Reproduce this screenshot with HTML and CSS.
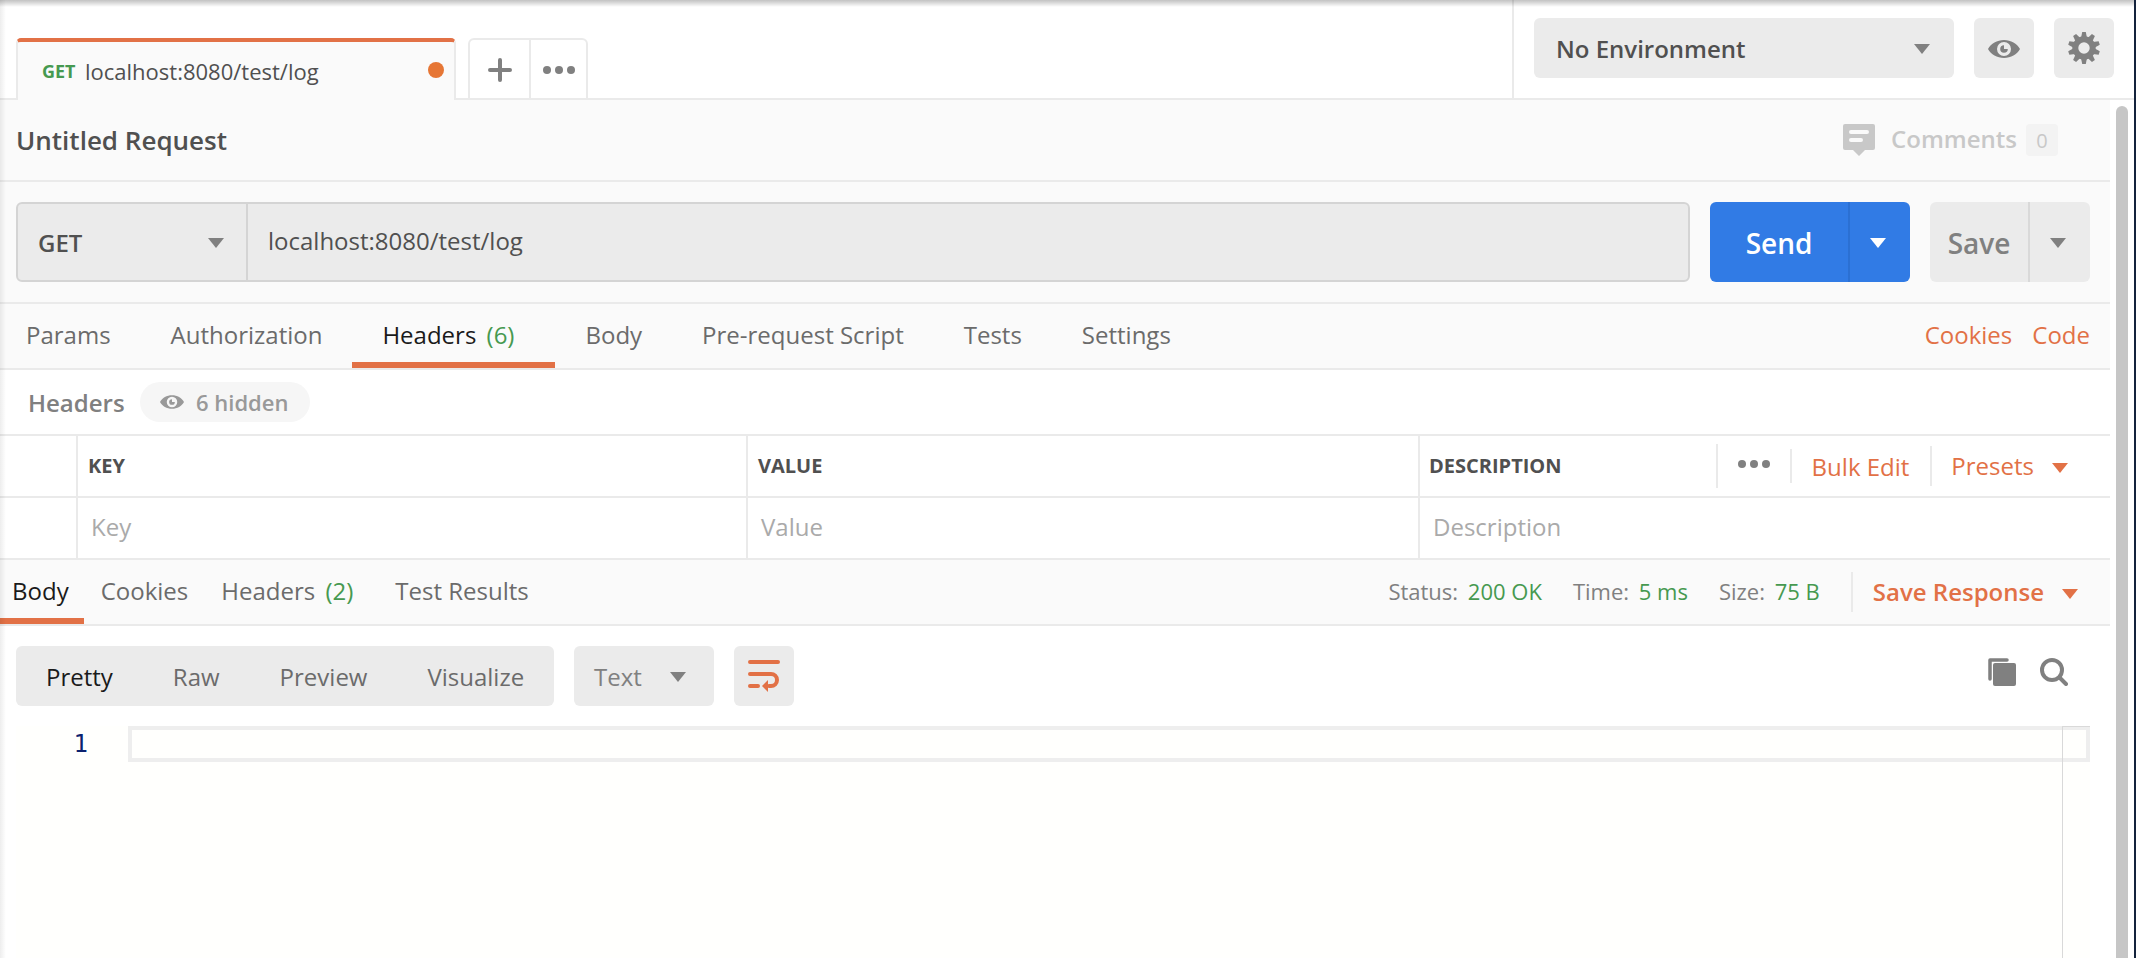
FILE: index.html
```html
<!DOCTYPE html>
<html lang="en">
<head>
    <meta charset="UTF-8">
    <meta name="viewport" content="width=device-width, initial-scale=1.0">
    <title>Untitled Request</title>
    <link rel="stylesheet" href="styles.css">
</head>
<body>
    <svg class="defs">
        <symbol id="eye" viewBox="0 0 32 18">
            <path fill="currentColor" fill-rule="evenodd" d="M0 9C3 3.500 9 0 16 0s13 3.500 16 9c-3 5.500-9 9-16 9S3 14.500 0 9zM16 2a7 7 0 1 0 0 14a7 7 0 1 0 0-14z"/>
            <path fill="currentColor" d="M16 5.200v3.800h3.800a3.800 3.800 0 1 1-3.800-3.800z"/>
        </symbol>
    </svg>

    <div class="app">
        <!-- Tabs and environment -->
        <div class="topbar">
            <div class="request-tab">
                <span class="tab-method">GET</span>
                <span class="tab-name">localhost:8080/test/log</span>
                <span class="unsaved"></span>
            </div>
            <div class="tab-actions">
                <div class="tab-action">
                    <svg width="24" height="24" viewBox="0 0 24 24"><path d="M12 2v20M2 12h20" stroke="#808080" stroke-width="4" stroke-linecap="round"/></svg>
                </div>
                <div class="tab-action">
                    <svg width="32" height="8" viewBox="0 0 32 8" fill="#808080"><circle cx="4" cy="4" r="4"/><circle cx="16" cy="4" r="4"/><circle cx="28" cy="4" r="4"/></svg>
                </div>
            </div>
            <div class="environment">
                <div class="env-select">No Environment <i class="caret"></i></div>
                <div class="icon-button preview"><svg width="32" height="18"><use href="#eye"/></svg></div>
                <div class="icon-button">
                    <svg width="32" height="32" viewBox="-16 -16 32 32">
                        <g fill="#808080">
                            <path id="tooth" d="M-3-10L-1.800-16h3.600L3-10z"/>
                            <use href="#tooth" transform="rotate(36)"/>
                            <use href="#tooth" transform="rotate(72)"/>
                            <use href="#tooth" transform="rotate(108)"/>
                            <use href="#tooth" transform="rotate(144)"/>
                            <use href="#tooth" transform="rotate(180)"/>
                            <use href="#tooth" transform="rotate(216)"/>
                            <use href="#tooth" transform="rotate(252)"/>
                            <use href="#tooth" transform="rotate(288)"/>
                            <use href="#tooth" transform="rotate(324)"/>
                        </g>
                        <circle r="8.700" fill="none" stroke="#808080" stroke-width="6"/>
                    </svg>
                </div>
            </div>
        </div>

        <div class="main">
            <div class="content">
                <div class="title-row">
                    <span class="title">Untitled Request</span>
                    <div class="comments">
                        <svg width="32" height="32" viewBox="0 0 32 32"><path fill="#c8c8c8" d="M2 0h28a2 2 0 0 1 2 2v22a2 2 0 0 1-2 2h-8l-6 6-6-6H2a2 2 0 0 1-2-2V2a2 2 0 0 1 2-2z"/><path d="M8 8h16M8 16h10" stroke="#fafafa" stroke-width="4" stroke-linecap="round"/></svg>
                        <span class="comments-label">Comments</span>
                        <span class="comments-count">0</span>
                    </div>
                </div>

                <!-- URL row -->
                <div class="url-row">
                    <div class="url-box">
                        <div class="method">GET <i class="caret"></i></div>
                        <div class="url">localhost:8080/test/log</div>
                    </div>
                    <div class="split send">
                        <span class="split-label">Send</span>
                        <span class="split-arrow"><i class="caret"></i></span>
                    </div>
                    <div class="split save">
                        <span class="split-label">Save</span>
                        <span class="split-arrow"><i class="caret"></i></span>
                    </div>
                </div>

                <div class="request-tabs">
                    <span class="rtab">Params</span>
                    <span class="rtab">Authorization</span>
                    <span class="rtab active">Headers <em class="count">(6)</em></span>
                    <span class="rtab">Body</span>
                    <span class="rtab">Pre-request Script</span>
                    <span class="rtab">Tests</span>
                    <span class="rtab">Settings</span>
                    <div class="links">
                        <span>Cookies</span>
                        <span>Code</span>
                    </div>
                </div>

                <!-- Headers editor -->
                <div class="headers-row">
                    <span class="headers-label">Headers</span>
                    <span class="hidden-pill"><svg width="24" height="14"><use href="#eye"/></svg>6 hidden</span>
                </div>
                <div class="table">
                    <div class="cell"></div>
                    <div class="cell head">KEY</div>
                    <div class="cell head">VALUE</div>
                    <div class="cell head">DESCRIPTION
                        <div class="table-actions">
                            <span class="more"><svg width="32" height="8" viewBox="0 0 32 8" fill="#808080"><circle cx="4" cy="4" r="4"/><circle cx="16" cy="4" r="4"/><circle cx="28" cy="4" r="4"/></svg></span>
                            <span class="bulk">Bulk Edit</span>
                            <span class="presets">Presets <i class="caret"></i></span>
                        </div>
                    </div>
                    <div class="cell"></div>
                    <div class="cell hint">Key</div>
                    <div class="cell hint">Value</div>
                    <div class="cell hint">Description</div>
                </div>

                <!-- Response -->
                <div class="response-bar">
                    <span class="restab active">Body</span>
                    <span class="restab">Cookies</span>
                    <span class="restab with-count">Headers <em class="count">(2)</em></span>
                    <span class="restab">Test Results</span>
                    <div class="stats">
                        <span class="stat">Status: <b>200 OK</b></span>
                        <span class="stat">Time: <b>5 ms</b></span>
                        <span class="stat">Size: <b>75 B</b></span>
                        <span class="save-response">Save Response <i class="caret"></i></span>
                    </div>
                </div>
                <div class="view-row">
                    <div class="view-modes">
                        <span class="mode active">Pretty</span>
                        <span class="mode">Raw</span>
                        <span class="mode">Preview</span>
                        <span class="mode">Visualize</span>
                    </div>
                    <div class="format">Text <i class="caret"></i></div>
                    <div class="icon-button">
                        <svg width="32" height="32" viewBox="0 0 32 32" fill="none" stroke="#e27146" stroke-width="4" stroke-linecap="round"><path d="M2 2h28M2 14h21a6 6 0 0 1 0 12h-2M2 26h8"/><path d="M20 20v12l-6-6z" fill="#e27146" stroke="none"/></svg>
                    </div>
                    <div class="view-tools">
                        <svg width="28" height="28" viewBox="0 0 28 28"><path d="M2 21V2h17" fill="none" stroke="#808080" stroke-width="3.500" stroke-linecap="round" stroke-linejoin="round"/><rect x="5" y="5" width="23" height="23" rx="2" fill="#808080"/></svg>
                        <svg width="28" height="28" viewBox="0 0 28 28" fill="none" stroke="#808080" stroke-width="4" stroke-linecap="round"><circle cx="12" cy="12" r="10"/><path d="M19.500 19.500l6.500 6.500"/></svg>
                    </div>
                </div>
                <div class="editor">
                    <div class="line-number">1</div>
                    <div class="code">
                        <div class="current-line"></div>
                        <div class="ruler"></div>
                    </div>
                </div>
            </div>
            <div class="scrollbar"><div class="thumb"></div></div>
        </div>
    </div>
</body>
</html>
```

FILE: styles.css
```css
* {
    box-sizing: border-box;
}

body {
    margin: 0;
    height: 958px;
    overflow: hidden;
    background: #14233c;
    font-family: "Open Sans", sans-serif;
    font-size: 24px;
    line-height: 32px;
    color: #505050;
    white-space: nowrap;
}

svg {
    display: block;
    flex-shrink: 0;
}

.defs {
    position: absolute;
    width: 0;
    height: 0;
}

.app {
    position: relative;
    display: flex;
    flex-direction: column;
    width: 2134px;
    height: 958px;
    overflow: hidden;
    background: #fff;
}

/* window shadow along the top and left edges */
.app::after {
    content: "";
    position: absolute;
    inset: 0;
    background:
        linear-gradient(rgba(0, 0, 0, 0.24), rgba(0, 0, 0, 0.14) 3px, transparent) top / 100% 7px no-repeat,
        linear-gradient(to right, rgba(0, 0, 0, 0.07), transparent) left / 6px 100% no-repeat;
}

.caret {
    border: 8px solid transparent;
    border-top: 10px solid #808080;
    border-bottom: 0;
}

.count {
    font-style: normal;
    color: #469950;
    margin-left: 4px;
}

/* top bar */
.topbar {
    display: flex;
    align-items: flex-end;
    height: 100px;
    padding-left: 16px;
    flex-shrink: 0;
    background: linear-gradient(#eaeaea, #eaeaea) bottom / 100% 2px no-repeat;
}

.request-tab {
    display: flex;
    align-items: center;
    width: 440px;
    height: 62px;
    padding: 0 10px 0 24px;
    border: 2px solid #eaeaea;
    border-top: 4px solid #e27146;
    border-bottom: 0;
    border-radius: 5px 5px 0 0;
    background: #fafafa;
    font-size: 22px;
}

.tab-method {
    width: 43px;
    font-size: 18px;
    font-weight: 700;
    color: #469950;
}

.unsaved {
    width: 16px;
    height: 16px;
    margin-left: auto;
    margin-bottom: 2px;
    border-radius: 50%;
    background: #e67635;
}

.tab-actions {
    display: flex;
    width: 120px;
    height: 62px;
    margin-left: 12px;
    border: 2px solid #eaeaea;
    border-radius: 6px 6px 0 0;
}

.tab-action {
    display: flex;
    align-items: center;
    justify-content: center;
    width: 59px;
    padding-top: 2px;
}

.tab-action + .tab-action {
    width: 57px;
    border-left: 2px solid #eaeaea;
}

.environment {
    display: flex;
    align-items: flex-start;
    gap: 20px;
    height: 100px;
    margin-left: auto;
    padding: 18px 20px 0;
    border-left: 2px solid #eaeaea;
}

.env-select {
    display: flex;
    align-items: center;
    justify-content: space-between;
    width: 420px;
    height: 60px;
    padding: 2px 24px 0 22px;
    border-radius: 6px;
    background: #ebebeb;
    font-weight: 600;
}

.icon-button {
    display: flex;
    align-items: center;
    justify-content: center;
    width: 60px;
    height: 60px;
    border-radius: 6px;
    background: #ebebeb;
    color: #808080;
}

.preview {
    padding-top: 2px;
}

.main {
    display: flex;
    flex: 1;
    min-height: 0;
}

.content {
    display: flex;
    flex-direction: column;
    width: 2110px;
}

.scrollbar {
    flex: 1;
    padding: 6px 6px 0;
}

.thumb {
    height: 100%;
    border-radius: 6px 6px 0 0;
    background: #c6c6c6;
}

/* title */
.title-row {
    display: flex;
    align-items: center;
    justify-content: space-between;
    height: 82px;
    padding: 0 52px 0 16px;
    border-bottom: 2px solid #eaeaea;
    background: #fafafa;
}

.title {
    font-size: 26px;
    font-weight: 600;
}

.comments {
    display: flex;
    align-items: center;
    color: #c8c8c8;
}

.comments-label {
    margin: -3px 9px 0 16px;
    font-weight: 600;
}

.comments-count {
    width: 32px;
    height: 32px;
    border-radius: 4px;
    background: #f3f3f3;
    font-size: 20px;
    line-height: 34px;
    text-align: center;
}

/* url */
.url-row {
    display: flex;
    gap: 20px;
    height: 122px;
    padding: 20px 20px 20px 16px;
    border-bottom: 2px solid #eaeaea;
    background: #fafafa;
}

.url-box {
    display: flex;
    flex: 1;
    height: 80px;
    border: 2px solid #d4d4d4;
    border-radius: 6px;
    background: #ebebeb;
}

.method {
    display: flex;
    align-items: center;
    justify-content: space-between;
    width: 230px;
    padding: 2px 22px 0 20px;
    border-right: 2px solid #d4d4d4;
    font-weight: 600;
}

.url {
    padding: 21px 20px;
}

.split {
    display: flex;
    align-items: center;
    height: 80px;
    border-radius: 6px;
    font-size: 28px;
    font-weight: 600;
}

.split-label {
    flex: 1;
    padding-top: 2px;
    text-align: center;
}

.split-arrow {
    display: flex;
    align-items: center;
    justify-content: center;
    width: 62px;
    height: 80px;
    padding: 2px 4px 0 0;
}

.send {
    width: 200px;
    background: #317be5;
    color: #fff;
}

.send .split-arrow {
    border-left: 2px solid #2b70d3;
}

.send .caret {
    border-top-color: #fff;
}

.save {
    width: 160px;
    background: #ebebeb;
    color: #808080;
}

.save .split-arrow {
    border-left: 2px solid #d9d9d9;
}

/* request tabs */
.request-tabs {
    display: flex;
    height: 66px;
    padding-right: 20px;
    border-bottom: 2px solid #eaeaea;
    background: #fafafa;
    color: #6b6b6b;
    line-height: 62px;
}

.rtab {
    padding: 0 30px;
}

.rtab:first-child {
    padding-left: 26px;
}

.rtab.active {
    padding-right: 41px;
    border-bottom: 6px solid #e27146;
    color: #1a1a1a;
}

.links {
    display: flex;
    gap: 20px;
    margin-left: auto;
    color: #e27146;
}

.headers-row {
    display: flex;
    align-items: center;
    height: 64px;
    padding-left: 28px;
    color: #808080;
    font-weight: 600;
}

.headers-label {
    width: 112px;
    padding-top: 2px;
}

.hidden-pill {
    display: flex;
    align-items: center;
    gap: 12px;
    width: 170px;
    height: 40px;
    padding-left: 20px;
    border-radius: 20px;
    background: #f6f6f6;
    color: #999;
    font-size: 22px;
}

.table {
    display: grid;
    grid-template-columns: 76px 670px 672px 1fr;
    grid-template-rows: 62px 62px;
    border-bottom: 2px solid #eaeaea;
}

.cell {
    display: flex;
    align-items: center;
    padding: 0 10px;
    border-top: 2px solid #eaeaea;
    border-left: 2px solid #eaeaea;
}

.cell:nth-child(4n + 1) {
    border-left: 0;
}

.head {
    font-size: 20px;
    font-weight: 700;
}

.hint {
    padding: 0 13px 2px;
    color: #aaa;
}

.head:nth-child(4n) {
    padding-left: 9px;
}

.table-actions {
    display: flex;
    align-items: center;
    margin-left: auto;
    margin-right: 32px;
    color: #e27146;
    font-size: 24px;
    font-weight: 400;
}

.more {
    display: flex;
    height: 44px;
    padding: 16px 20px 0;
    border-left: 2px solid #eaeaea;
}

.bulk {
    height: 34px;
    padding: 0 21px 0 20px;
    border-left: 2px solid #eaeaea;
    line-height: 35px;
}

.presets {
    display: flex;
    align-items: center;
    gap: 18px;
    height: 40px;
    padding-left: 19px;
    border-left: 2px solid #eaeaea;
}

/* response */
.response-bar {
    display: flex;
    height: 66px;
    border-bottom: 2px solid #eaeaea;
    background: #fafafa;
    color: #6b6b6b;
    line-height: 61px;
}

.restab {
    margin-right: 18px;
    padding-right: 15px;
}

.restab.active {
    margin-right: 17px;
    padding-left: 12px;
    border-bottom: 6px solid #e27146;
    color: #1a1a1a;
}

.restab.with-count {
    padding-right: 24px;
}

.stats {
    display: flex;
    align-items: center;
    margin-left: auto;
    padding-right: 32px;
    color: #808080;
    font-size: 22px;
}

.stat {
    margin: -2px 31px 0 0;
}

.stat b {
    margin-left: 4px;
    font-weight: 400;
    color: #469950;
}

.save-response {
    display: flex;
    align-items: center;
    gap: 18px;
    height: 40px;
    padding-left: 20px;
    border-left: 2px solid #eaeaea;
    color: #e27146;
    font-size: 24px;
    font-weight: 600;
    line-height: 38px;
}

.presets .caret,
.save-response .caret {
    margin-top: 4px;
    border-top-color: #e27146;
}

.view-row {
    display: flex;
    gap: 20px;
    padding: 20px 42px 20px 16px;
}

.view-modes {
    display: flex;
    width: 538px;
    height: 60px;
    padding-left: 30px;
    gap: 60px;
    border-radius: 6px;
    background: #ebebeb;
    color: #6b6b6b;
    line-height: 62px;
}

.mode.active {
    color: #1a1a1a;
}

.format {
    display: flex;
    align-items: center;
    justify-content: space-between;
    width: 140px;
    padding: 2px 28px 0 20px;
    border-radius: 6px;
    background: #ebebeb;
    color: #808080;
}

.view-tools {
    display: flex;
    gap: 24px;
    margin-left: auto;
    padding-top: 12px;
}

.editor {
    display: flex;
    flex: 1;
    margin: 0 20px 0 16px;
    background: #fffffd;
}

.line-number {
    width: 112px;
    padding: 2px 40px 0 0;
    color: #0b216f;
    font-family: "DejaVu Sans Mono", monospace;
    font-size: 24px;
    text-align: right;
}

.code {
    position: relative;
    flex: 1;
}

.current-line {
    height: 36px;
    border: 4px solid #eee;
}

/* overview ruler sits over the text area */
.ruler {
    position: absolute;
    top: 0;
    right: 0;
    bottom: 0;
    width: 28px;
    border-left: 1px solid #d9d9d9;
    border-top: 1px solid #d9d9d9;
}
```
